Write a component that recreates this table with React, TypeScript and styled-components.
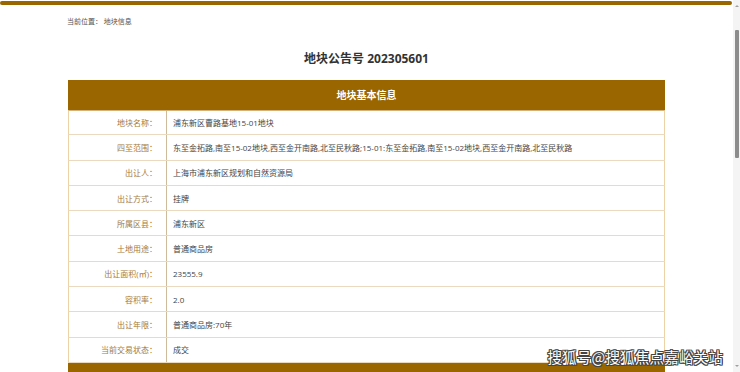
import React from "react";
import styled, { createGlobalStyle } from "styled-components";

const Colors = {
  brand: "#996600",
  label: "#a47a3c",
  text: "#444444",
  title: "#333333",
  rowLine: "#eadbc0",
  sideLine: "#edd2a6",
  divider: "#cdbb9c",
};

const fontStack = `"Open Sans", "Noto Sans CJK SC", sans-serif`;

interface Field {
  label: string;
  value: string;
}

const fields: Field[] = [
  { label: "地块名称：", value: "浦东新区曹路基地15-01地块" },
  {
    label: "四至范围：",
    value:
      "东至金拓路,南至15-02地块,西至金开南路,北至民秋路;15-01:东至金拓路,南至15-02地块,西至金开南路,北至民秋路",
  },
  { label: "出让人：", value: "上海市浦东新区规划和自然资源局" },
  { label: "出让方式：", value: "挂牌" },
  { label: "所属区县：", value: "浦东新区" },
  { label: "土地用途：", value: "普通商品房" },
  { label: "出让面积(㎡)：", value: "23555.9" },
  { label: "容积率：", value: "2.0" },
  { label: "出让年限：", value: "普通商品房:70年" },
  { label: "当前交易状态：", value: "成交" },
];

const GlobalStyle = createGlobalStyle`
  html, body {
    margin: 0;
    padding: 0;
    height: 100%;
    overflow: hidden;
    background: #ffffff;
    font-family: ${fontStack};
  }
  #root {
    height: 100%;
  }
`;

const App: React.FC = () => {
  return (
    <>
      <GlobalStyle />
      <Window>
        <Main>
          <TopBar />
          <Breadcrumb>当前位置：&nbsp;地块信息</Breadcrumb>
          <Title>地块公告号 202305601</Title>
          <Section>
            <SectionHeader>地块基本信息</SectionHeader>
            {fields.map((f, i) => (
              <Row key={f.label} first={i === 0}>
                <Label>{f.label}</Label>
                <Value>{f.value}</Value>
              </Row>
            ))}
            <SectionHeader />
          </Section>
          <Watermark>搜狐号@搜狐焦点嘉峪关站</Watermark>
        </Main>
        <ScrollBar>
          <Arrow up />
          <Track>
            <Thumb />
          </Track>
          <Arrow />
        </ScrollBar>
      </Window>
    </>
  );
};

export default App;

const Window = styled.div`
  display: flex;
  height: 100%;
`;

const Main = styled.div`
  position: relative;
  flex: 1;
  display: flex;
  flex-direction: column;
  align-items: center;
  overflow: hidden;

  & > * {
    flex-shrink: 0;
  }
`;

const TopBar = styled.div`
  align-self: stretch;
  height: 4px;
  margin: 1px 1px 0 0;
  border-radius: 2px;
  background-color: ${Colors.brand};
`;

const Breadcrumb = styled.div`
  align-self: stretch;
  padding: 10px 0 0 67px;
  height: 14px;
  line-height: 14px;
  font-size: 7px;
  color: #555555;
`;

const Title = styled.h1`
  margin: 21px 0 0;
  height: 18px;
  line-height: 18px;
  font-size: 12px;
  font-weight: 700;
  color: ${Colors.title};
`;

const Section = styled.div`
  margin-top: 12px;
  width: 597px;
  display: flex;
  flex-direction: column;

  & > * {
    flex-shrink: 0;
  }
`;

const SectionHeader = styled.div`
  height: 30px;
  line-height: 30px;
  text-align: center;
  background-color: ${Colors.brand};
  color: #ffffff;
  font-size: 10px;
  font-weight: 700;
`;

const Row = styled.div<{ first?: boolean }>`
  display: flex;
  height: 25.3px;
  box-sizing: border-box;
  border-left: 1px solid ${Colors.sideLine};
  border-right: 1px solid ${Colors.sideLine};
  border-bottom: 1px solid ${Colors.rowLine};
  border-top: ${(p) => (p.first ? `1px solid #d4b27a` : "none")};
  font-size: 8px;
`;

const Label = styled.div`
  width: 98px;
  flex-shrink: 0;
  box-sizing: border-box;
  padding-right: 9px;
  display: flex;
  align-items: center;
  justify-content: flex-end;
  color: ${Colors.label};
  border-right: 1px solid ${Colors.divider};
`;

const Value = styled.div`
  flex: 1;
  padding-left: 6px;
  display: flex;
  align-items: center;
  color: ${Colors.text};
  white-space: nowrap;
`;

const Watermark = styled.div`
  position: absolute;
  right: 10px;
  bottom: 6px;
  font-size: 14.5px;
  line-height: 18px;
  color: #ffffff;
  font-family: "Noto Sans CJK SC", sans-serif;
  letter-spacing: 0.2px;
  text-shadow: 1px 1px 0 #444, -1px -1px 0 #444, 1px -1px 0 #444,
    -1px 1px 0 #444, 1px 0 0 #444, -1px 0 0 #444, 0 1px 0 #444, 0 -1px 0 #444;
`;

const ScrollBar = styled.div`
  width: 7px;
  flex-shrink: 0;
  display: flex;
  flex-direction: column;
  align-items: center;
  background-color: #f4f4f4;
`;

const Arrow = styled.div<{ up?: boolean }>`
  flex-shrink: 0;
  width: 0;
  height: 0;
  margin: ${(p) => (p.up ? "5px 0 0" : "0 0 5px")};
  border-left: 2px solid transparent;
  border-right: 2px solid transparent;
  ${(p) =>
    p.up
      ? `border-bottom: 2px solid #a0a0a0;`
      : `border-top: 2px solid #a0a0a0;`}
`;

const Track = styled.div`
  flex: 1;
  align-self: stretch;
  padding-top: 23px;
`;

const Thumb = styled.div`
  margin: 0 auto;
  width: 4px;
  height: 128px;
  border-radius: 1px;
  background-color: #8c8c8c;
`;
